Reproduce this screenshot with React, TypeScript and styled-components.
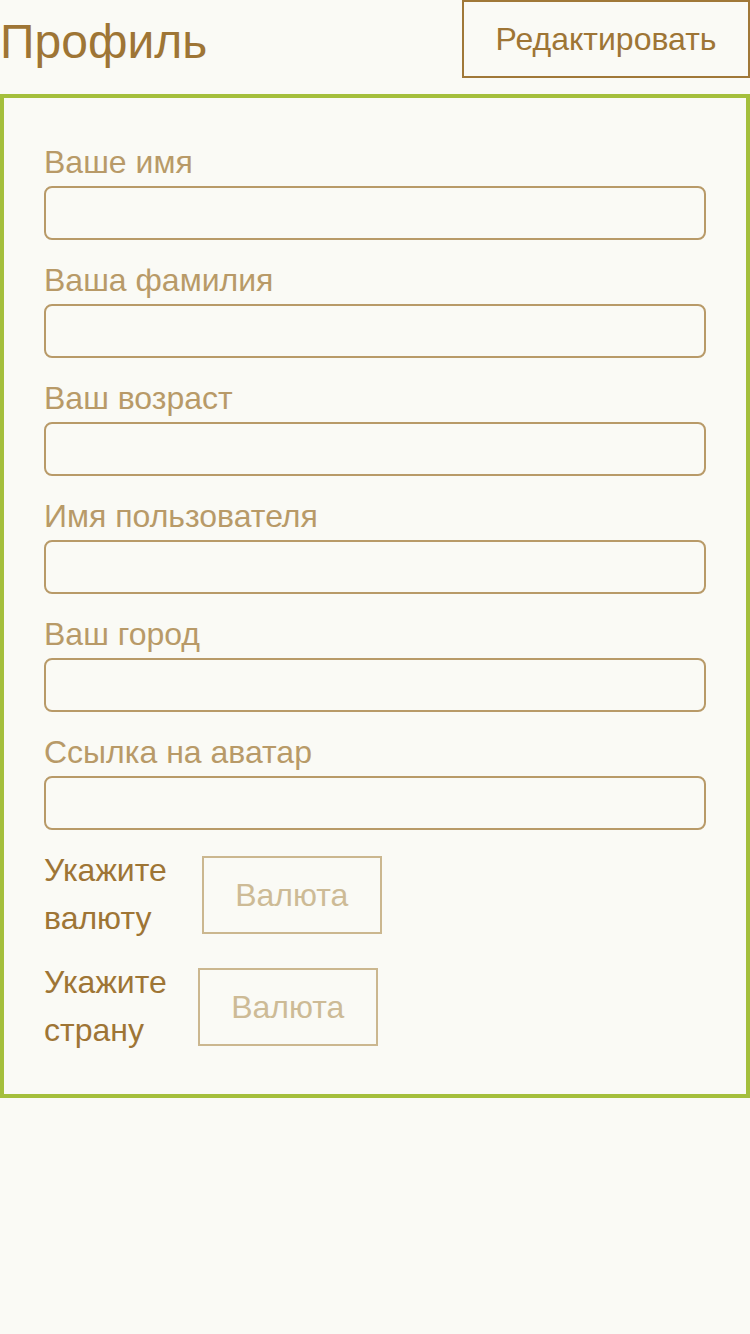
import React from "react";
import styled, { createGlobalStyle } from "styled-components";

const Global = createGlobalStyle`
  html, body { margin: 0; padding: 0; background: #fafaf5; }
  body { font-family: "Liberation Sans", Arial, sans-serif; }
  * { box-sizing: border-box; }
`;

const Page = styled.div`
  width: 750px;
  min-height: 1334px;
  background: #fafaf5;
`;

const Header = styled.header`
  display: flex;
  justify-content: space-between;
  align-items: flex-start;
  height: 78px;
`;

const Title = styled.h1`
  margin: 0;
  padding-top: 14px;
  font-size: 48px;
  font-weight: 400;
  line-height: 55px;
  color: #9e7535;
`;

const EditButton = styled.button`
  width: 288px;
  height: 78px;
  padding: 0;
  border: 2px solid #a07838;
  background: transparent;
  font-family: "Liberation Sans", Arial, sans-serif;
  font-size: 32px;
  color: #9e7535;
`;

const Card = styled.form`
  margin-top: 16px;
  border: 4px solid #a4bf3c;
  padding: 40px;
  display: flex;
  flex-direction: column;
  gap: 16px;
`;

const Field = styled.div`
  display: flex;
  flex-direction: column;
`;

const Label = styled.label`
  font-size: 32px;
  line-height: 48px;
  color: #b89a68;
`;

const Input = styled.input`
  height: 54px;
  border: 2px solid #b89a68;
  border-radius: 8px;
  background: transparent;
  font-size: 28px;
  padding: 0 12px;
  outline: none;
`;

const SelectRow = styled.div`
  display: flex;
  align-items: center;
`;

const RowLabel = styled.span<{ $gap: number }>`
  width: min-content;
  font-size: 32px;
  line-height: 48px;
  color: #9e7535;
  margin-right: ${(p) => p.$gap}px;
`;

const SelectButton = styled.button`
  width: 180px;
  height: 78px;
  margin-top: 2px;
  border: 2px solid #cbb78f;
  background: transparent;
  font-family: "Liberation Sans", Arial, sans-serif;
  font-size: 32px;
  color: #cdbb96;
`;

const fields = [
  "Ваше имя",
  "Ваша фамилия",
  "Ваш возраст",
  "Имя пользователя",
  "Ваш город",
  "Ссылка на аватар",
];

export default function App() {
  return (
    <Page>
      <Global />
      <Header>
        <Title>Профиль</Title>
        <EditButton type="button">Редактировать</EditButton>
      </Header>
      <Card onSubmit={(e) => e.preventDefault()}>
        {fields.map((f) => (
          <Field key={f}>
            <Label>{f}</Label>
            <Input type="text" />
          </Field>
        ))}
        <SelectRow>
          <RowLabel $gap={35}>Укажите валюту</RowLabel>
          <SelectButton type="button">Валюта</SelectButton>
        </SelectRow>
        <SelectRow>
          <RowLabel $gap={31}>Укажите страну</RowLabel>
          <SelectButton type="button">Валюта</SelectButton>
        </SelectRow>
      </Card>
    </Page>
  );
}
